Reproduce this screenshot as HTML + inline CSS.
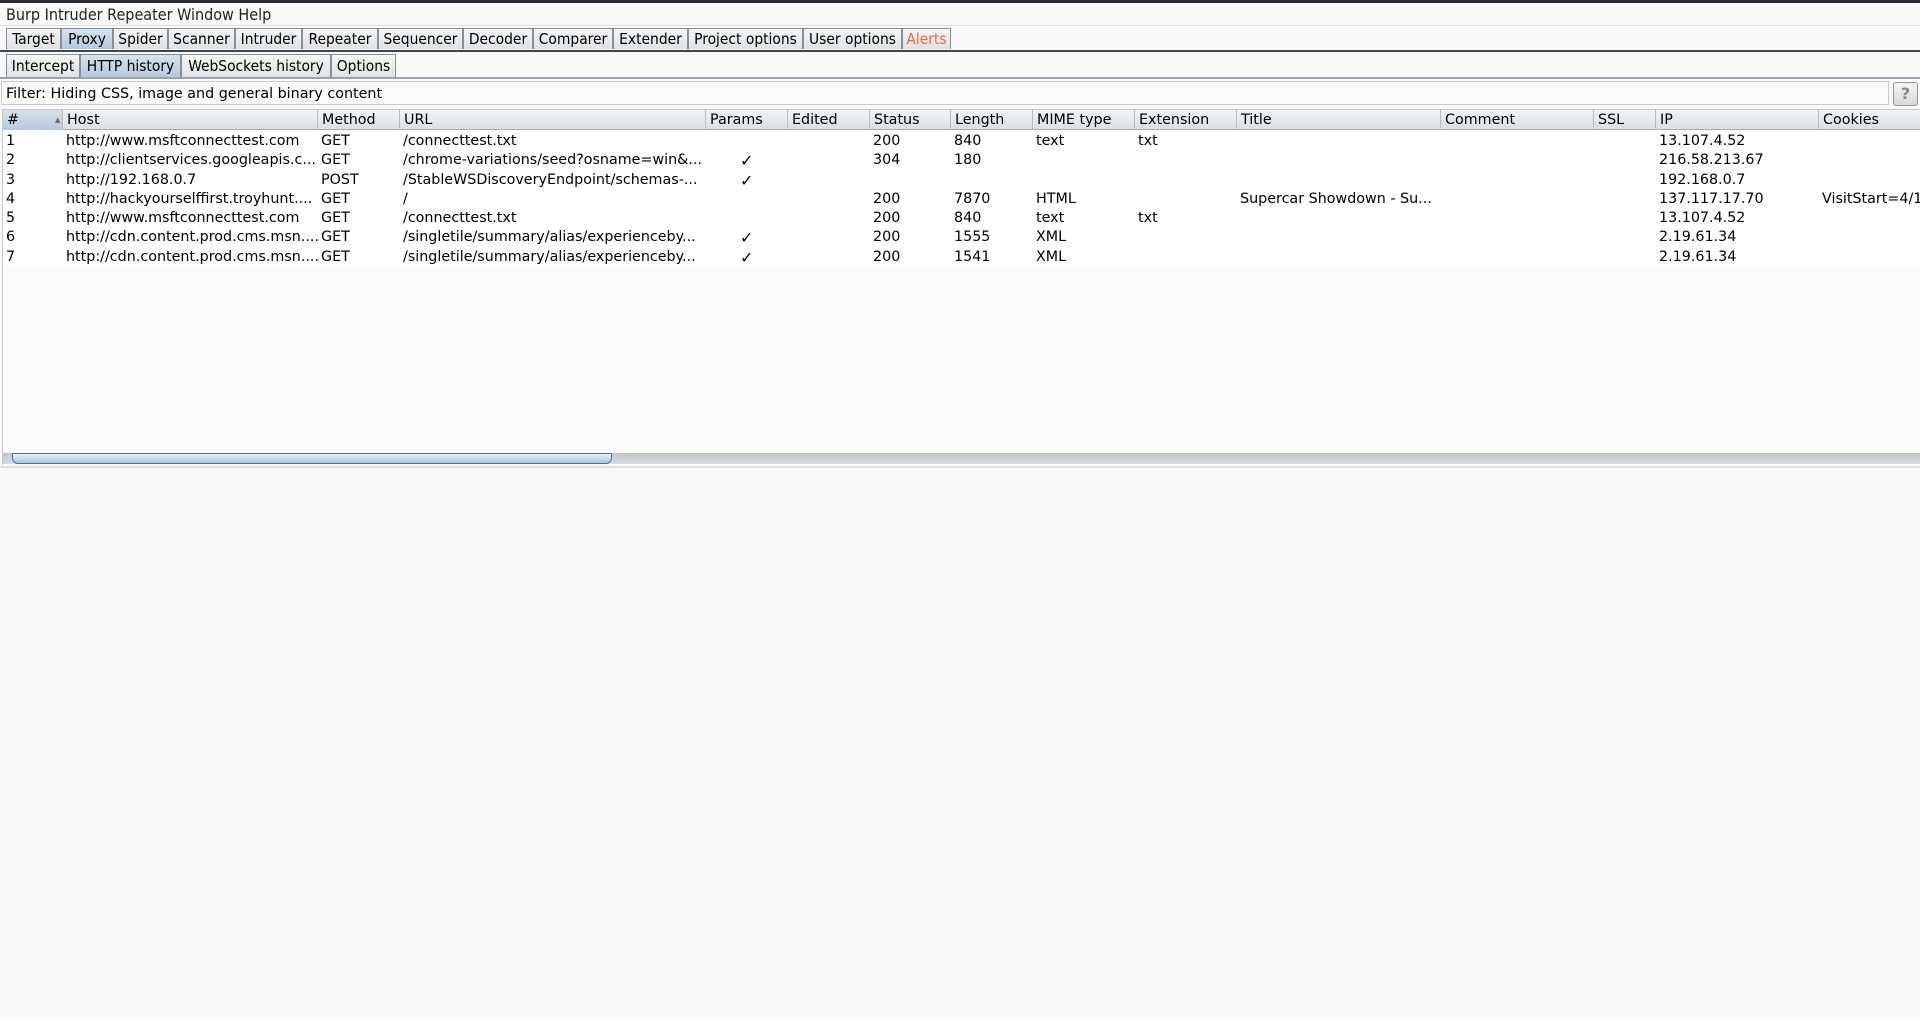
<!DOCTYPE html>
<html><head><meta charset="utf-8"><style>
body{margin:0;width:1920px;height:1017px;background:#f9f9f9;position:relative;overflow:hidden;font-family:"DejaVu Sans","Liberation Sans",sans-serif;font-size:14px;color:#000}
.a{position:absolute;white-space:nowrap}
.tab{position:absolute;top:28px;height:21px;border:1px solid #8a8f95;border-bottom:none;background:linear-gradient(#f6f6f6,#dfe1e4);font-family:"DejaVu Sans Condensed","DejaVu Sans",sans-serif;font-stretch:condensed;font-size:15.4px;line-height:21px;text-align:center;box-sizing:border-box}
.sel{background:linear-gradient(#d6e2ee,#b5c8db)}
.sub{top:54px;height:23px;line-height:23px}
.h{position:absolute;top:110px;height:20px;line-height:21px;border-right:1px solid #b8bcc2;box-sizing:border-box;padding-left:4px;font-size:14.3px}
.r{position:absolute;font-size:14.3px;line-height:19.3px}
</style></head><body>
<div class="a" style="left:0;top:0;width:1920px;height:3px;background:#2b2e33"></div>
<div class="a" style="left:6px;top:5px;font-family:'DejaVu Sans Condensed','DejaVu Sans',sans-serif;font-stretch:condensed;font-size:16px;line-height:20px;color:#222">Burp Intruder Repeater Window Help</div>
<div class="a" style="left:0;top:25px;width:1920px;height:1px;background:#e0e0e0"></div>
<div class="tab" style="left:6px;width:55px">Target</div>
<div class="tab sel" style="left:61px;width:52px">Proxy</div>
<div class="tab" style="left:113px;width:55px">Spider</div>
<div class="tab" style="left:168px;width:67px">Scanner</div>
<div class="tab" style="left:235px;width:67px">Intruder</div>
<div class="tab" style="left:302px;width:76px">Repeater</div>
<div class="tab" style="left:378px;width:85px">Sequencer</div>
<div class="tab" style="left:463px;width:70px">Decoder</div>
<div class="tab" style="left:533px;width:80px">Comparer</div>
<div class="tab" style="left:613px;width:75px">Extender</div>
<div class="tab" style="left:688px;width:115px">Project options</div>
<div class="tab" style="left:803px;width:99px">User options</div>
<div class="tab" style="left:902px;width:49px;color:#f06a3c">Alerts</div>
<div class="a" style="left:0;top:50px;width:1920px;height:2px;background:#3e4650"></div>
<div class="tab sub" style="left:6px;width:74px">Intercept</div>
<div class="tab sub sel" style="left:80px;width:101px">HTTP history</div>
<div class="tab sub" style="left:181px;width:150px">WebSockets history</div>
<div class="tab sub" style="left:331px;width:65px">Options</div>
<div class="a" style="left:0;top:77px;width:1920px;height:2px;background:#9aa3ad"></div>
<div class="a" style="left:1px;top:81px;width:1888px;height:24px;border:1px solid #c9c9c9;background:#fafafa;box-sizing:border-box"></div>
<div class="a" style="left:6px;top:84px;font-size:14.3px;line-height:20px">Filter: Hiding CSS, image and general binary content</div>
<div class="a" style="left:1893px;top:82px;width:25px;height:24px;border:1px solid #999;border-radius:3px;background:linear-gradient(#f4f4f4,#d8d8d8);box-sizing:border-box;text-align:center;color:#888;font-weight:bold;font-size:16px;line-height:22px">?</div>
<div class="a" style="left:2px;top:109px;width:1918px;height:356px;border-left:1px solid #c8c8c8;border-top:1px solid #c8c8c8;background:#fafafa;box-sizing:border-box"></div>
<div class="a" style="left:3px;top:110px;width:1917px;height:20px;background:linear-gradient(#f2f3f5,#dcdfe3);border-bottom:1px solid #a8adb3;box-sizing:border-box"></div>
<div class="a" style="left:3px;top:131px;width:1917px;height:134px;background:#fff"></div>
<div class="h" style="left:3px;width:60px;background:linear-gradient(#d7e2ec,#b7c9da)">#<span style="position:absolute;left:52px;font-size:7px;color:#667">▲</span></div>
<div class="h" style="left:63px;width:255px">Host</div>
<div class="h" style="left:318px;width:82px">Method</div>
<div class="h" style="left:400px;width:306px">URL</div>
<div class="h" style="left:706px;width:82px">Params</div>
<div class="h" style="left:788px;width:82px">Edited</div>
<div class="h" style="left:870px;width:81px">Status</div>
<div class="h" style="left:951px;width:82px">Length</div>
<div class="h" style="left:1033px;width:102px">MIME type</div>
<div class="h" style="left:1135px;width:102px">Extension</div>
<div class="h" style="left:1237px;width:204px">Title</div>
<div class="h" style="left:1441px;width:153px">Comment</div>
<div class="h" style="left:1594px;width:62px">SSL</div>
<div class="h" style="left:1656px;width:163px">IP</div>
<div class="h" style="left:1819px;width:101px;border-right:none">Cookies</div>
<div class="r" style="left:6px;top:132px">1<br>2<br>3<br>4<br>5<br>6<br>7</div>
<div class="r" style="left:66px;top:132px">http://www.msftconnecttest.com<br>http://clientservices.googleapis.c...<br>http://192.168.0.7<br>http://hackyourselffirst.troyhunt....<br>http://www.msftconnecttest.com<br>http://cdn.content.prod.cms.msn....<br>http://cdn.content.prod.cms.msn....</div>
<div class="r" style="left:321px;top:132px">GET<br>GET<br>POST<br>GET<br>GET<br>GET<br>GET</div>
<div class="r" style="left:403px;top:132px">/connecttest.txt<br>/chrome-variations/seed?osname=win&amp;...<br>/StableWSDiscoveryEndpoint/schemas-...<br>/<br>/connecttest.txt<br>/singletile/summary/alias/experienceby...<br>/singletile/summary/alias/experienceby...</div>
<div class="r" style="left:740px;top:132px;font-size:16px;font-weight:bold">&nbsp;<br>✓<br>✓<br>&nbsp;<br>&nbsp;<br>✓<br>✓</div>
<div class="r" style="left:873px;top:132px">200<br>304<br>&nbsp;<br>200<br>200<br>200<br>200</div>
<div class="r" style="left:954px;top:132px">840<br>180<br>&nbsp;<br>7870<br>840<br>1555<br>1541</div>
<div class="r" style="left:1036px;top:132px">text<br>&nbsp;<br>&nbsp;<br>HTML<br>text<br>XML<br>XML</div>
<div class="r" style="left:1138px;top:132px">txt<br>&nbsp;<br>&nbsp;<br>&nbsp;<br>txt</div>
<div class="r" style="left:1240px;top:132px">&nbsp;<br>&nbsp;<br>&nbsp;<br>Supercar Showdown - Su...</div>
<div class="r" style="left:1659px;top:132px">13.107.4.52<br>216.58.213.67<br>192.168.0.7<br>137.117.17.70<br>13.107.4.52<br>2.19.61.34<br>2.19.61.34</div>
<div class="r" style="left:1822px;top:132px">&nbsp;<br>&nbsp;<br>&nbsp;<br>VisitStart=4/1</div>
<div class="a" style="left:3px;top:453px;width:1917px;height:11px;background:linear-gradient(#bfc3c8,#d9dcdf)"></div>
<div class="a" style="left:12px;top:453px;width:600px;height:11px;border:1px solid #5a7087;border-radius:0 0 6px 6px;background:linear-gradient(#e8f0f8,#a9c3dd);box-sizing:border-box"></div>
<div class="a" style="left:0;top:466px;width:1920px;height:2px;background:#dde0e4"></div>
</body></html>
